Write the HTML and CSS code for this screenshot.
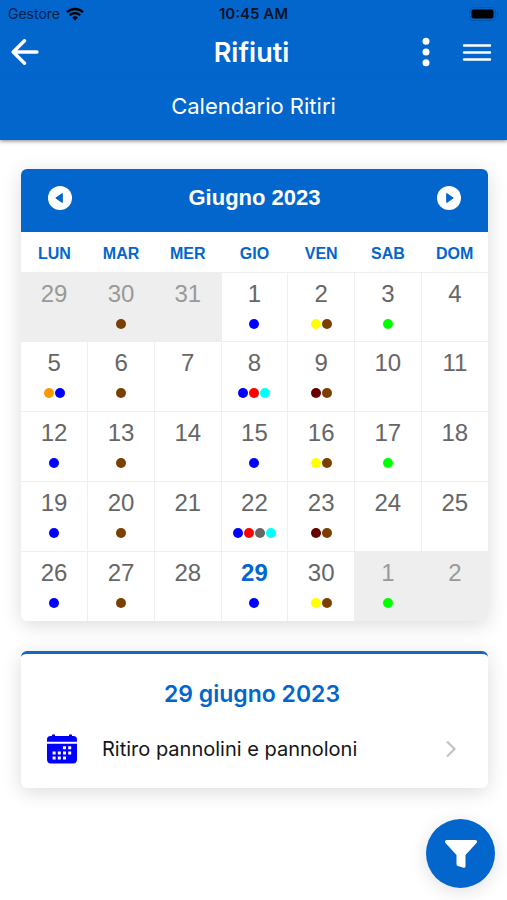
FILE: index.html
```html
<!DOCTYPE html>
<html lang="it">
<head>
<meta charset="utf-8">
<meta name="viewport" content="width=device-width, initial-scale=1">
<title>Rifiuti</title>
<link rel="stylesheet" href="styles.css">
</head>
<body>
<header class="header">
  <div class="status">
    <div class="carrier">
      <span>Gestore</span>
      <svg width="18" height="14" viewBox="0 0 18 14" aria-hidden="true"><path d="M1 5.2a11.6 11.6 0 0 1 16 0M3.8 8.2a7.6 7.6 0 0 1 10.4 0" fill="none" stroke="#000" stroke-width="2.4"/><path d="M6.1 10.6a4.3 4.3 0 0 1 5.8 0L9 13.6z"/></svg>
    </div>
    <span class="clock">10:45 AM</span>
    <svg class="battery" width="30" height="14" viewBox="0 0 30 14" aria-hidden="true"><rect x=".5" y=".5" width="26" height="13" rx="4" fill="none" stroke="#0355b0"/><rect x="2.500" y="2.500" width="22" height="9" rx="2"/><path d="M28 5v4q2-2 0-4" fill="#03479a"/></svg>
  </div>
  <div class="toolbar">
    <button class="icon-button" aria-label="Indietro"><svg width="28" height="26" viewBox="0 0 28 26"><path d="M13.500 1.800 2.200 13l11.300 11.200M2.500 13h23.500" fill="none" stroke="#fff" stroke-width="3.400" stroke-linecap="round" stroke-linejoin="round"/></svg></button>
    <h1 class="title">Rifiuti</h1>
    <div class="actions">
      <button class="icon-button" aria-label="Altro"><svg width="8" height="30" viewBox="0 0 8 30"><g fill="#fff"><circle cx="4" cy="4.300" r="3.500"/><circle cx="4" cy="15" r="3.500"/><circle cx="4" cy="25.700" r="3.500"/></g></svg></button>
      <button class="icon-button" aria-label="Menu"><svg width="30" height="20" viewBox="0 0 30 20"><path d="M2 3.500h26M2 10.500h26M2 17.500h26" stroke="#fff" stroke-width="2.400" stroke-linecap="round"/></svg></button>
    </div>
  </div>
  <h2 class="subtitle">Calendario Ritiri</h2>
</header>
<main class="content">
  <section class="calendar">
    <div class="month-bar">
      <button class="icon-button" aria-label="Mese precedente"><svg width="24" height="24" viewBox="0 0 24 24"><circle cx="12" cy="12" r="12" fill="#fff"/><path d="M14.300 7.500v9L7.800 12z" fill="#0266cd" stroke="#0266cd" stroke-linejoin="round"/></svg></button>
      <h2 class="month">Giugno 2023</h2>
      <button class="icon-button" aria-label="Mese successivo"><svg width="24" height="24" viewBox="0 0 24 24"><circle cx="12" cy="12" r="12" fill="#fff"/><path d="M9.700 7.500v9l6.500-4.500z" fill="#0266cd" stroke="#0266cd" stroke-linejoin="round"/></svg></button>
    </div>
    <table class="days">
      <thead><tr><th>LUN</th><th>MAR</th><th>MER</th><th>GIO</th><th>VEN</th><th>SAB</th><th>DOM</th></tr></thead>
      <tbody>
        <tr>
          <td class="outside">29<div class="dots"></div></td>
          <td class="outside">30<div class="dots"><i class="brown"></i></div></td>
          <td class="outside">31<div class="dots"></div></td>
          <td>1<div class="dots"><i class="blue"></i></div></td>
          <td>2<div class="dots"><i class="yellow"></i><i class="brown"></i></div></td>
          <td>3<div class="dots"><i class="green"></i></div></td>
          <td>4<div class="dots"></div></td>
        </tr>
        <tr>
          <td>5<div class="dots"><i class="orange"></i><i class="blue"></i></div></td>
          <td>6<div class="dots"><i class="brown"></i></div></td>
          <td>7<div class="dots"></div></td>
          <td>8<div class="dots"><i class="blue"></i><i class="red"></i><i class="cyan"></i></div></td>
          <td>9<div class="dots"><i class="maroon"></i><i class="brown"></i></div></td>
          <td>10<div class="dots"></div></td>
          <td>11<div class="dots"></div></td>
        </tr>
        <tr>
          <td>12<div class="dots"><i class="blue"></i></div></td>
          <td>13<div class="dots"><i class="brown"></i></div></td>
          <td>14<div class="dots"></div></td>
          <td>15<div class="dots"><i class="blue"></i></div></td>
          <td>16<div class="dots"><i class="yellow"></i><i class="brown"></i></div></td>
          <td>17<div class="dots"><i class="green"></i></div></td>
          <td>18<div class="dots"></div></td>
        </tr>
        <tr>
          <td>19<div class="dots"><i class="blue"></i></div></td>
          <td>20<div class="dots"><i class="brown"></i></div></td>
          <td>21<div class="dots"></div></td>
          <td>22<div class="dots"><i class="blue"></i><i class="red"></i><i class="gray"></i><i class="cyan"></i></div></td>
          <td>23<div class="dots"><i class="maroon"></i><i class="brown"></i></div></td>
          <td>24<div class="dots"></div></td>
          <td>25<div class="dots"></div></td>
        </tr>
        <tr>
          <td>26<div class="dots"><i class="blue"></i></div></td>
          <td>27<div class="dots"><i class="brown"></i></div></td>
          <td>28<div class="dots"></div></td>
          <td class="today">29<div class="dots"><i class="blue"></i></div></td>
          <td>30<div class="dots"><i class="yellow"></i><i class="brown"></i></div></td>
          <td class="outside">1<div class="dots"><i class="green"></i></div></td>
          <td class="outside">2<div class="dots"></div></td>
        </tr>
      </tbody>
    </table>
  </section>
  <section class="pickups">
    <h2 class="date">29 giugno 2023</h2>
    <a class="pickup" href="#">
      <svg width="30" height="30" viewBox="0 0 30 30" aria-hidden="true"><path d="M0 9V5.500Q0 2 3.500 2H5V.8Q6.500-.4 8 .8V2h14V.8q1.500-1.200 3 0V2h1.500Q30 2 30 5.500V7.800H0z" fill="#00f"/><path d="M0 9.800h30V25q0 4.500-4 4.500H4Q0 29.500 0 25z" fill="#00f"/><g fill="#fff"><path d="M16 12.200h3v3h-3zM21.200 12.200h3v3h-3zM5.600 17.500h3v3h-3zM10.800 17.500h3v3h-3zM16 17.500h3v3h-3zM21.200 17.500h3v3h-3zM5.600 22.600h3v3h-3zM10.800 22.600h3v3h-3zM16 22.600h3v3h-3z"/></g></svg>
      <span class="pickup-name">Ritiro pannolini e pannoloni</span>
      <svg width="12" height="18" viewBox="0 0 12 18" aria-hidden="true"><path d="m2 1.500 7.500 7.500L2 16.500" fill="none" stroke="#c4c4c6" stroke-width="2.200"/></svg>
    </a>
  </section>
</main>
<button class="filter" aria-label="Filtra"><svg width="34" height="30" viewBox="0 0 34 30"><path d="M2.500 1h29q2.500.6 1 3L21.500 16V27.500q-.3 1.500-1.700 1.200l-6-1.800q-1.300-.5-1.300-2V16L1.500 4Q0 1.500 2.500 1z" fill="#fff"/></svg></button>
</body>
</html>
```
FILE: styles.css
```css
* {
  box-sizing: border-box;
}

body {
  margin: 0;
  min-height: 100vh;
  background: #fff;
  color: #151515;
  font-family: Inter, sans-serif;
}

h1, h2 {
  margin: 0;
}

button {
  padding: 0;
  border: 0;
  background: none;
  cursor: pointer;
}

svg {
  display: block;
}

.header {
  background: #0266cd;
  color: #fff;
  box-shadow: 0 1px 4px rgba(0, 0, 0, 0.5);
}

.status {
  display: grid;
  grid-template-columns: 1fr auto 1fr;
  align-items: center;
  height: 27px;
  padding: 0 8px;
  color: #001f45;
  font-size: 14px;
}

.carrier {
  display: flex;
  align-items: center;
  gap: 6px;
}

.clock {
  color: #001226;
  font-size: 15px;
  font-weight: 600;
}

.battery {
  justify-self: end;
}

.toolbar {
  display: grid;
  grid-template-columns: 1fr auto 1fr;
  align-items: center;
  height: 51px;
  padding: 0 15px 0 11px;
  border-bottom: 1px solid #0862c1;
}

.title {
  font-size: 27px;
  font-weight: 600;
}

.actions {
  display: flex;
  align-items: center;
  justify-content: flex-end;
  gap: 32px;
}

.subtitle {
  padding: 14px 0 20px;
  font-size: 22px;
  font-weight: 400;
  line-height: 28px;
  text-align: center;
}

.content {
  display: flex;
  flex-direction: column;
  gap: 30px;
  padding: 29px 19px 29px 21px;
}

.calendar,
.pickups {
  border-radius: 6px;
  background: #fff;
  box-shadow: 0 4px 20px rgba(0, 0, 0, 0.14);
}

.calendar {
  overflow: hidden;
  font-family: "Liberation Sans", sans-serif;
}

.month-bar {
  display: flex;
  align-items: flex-start;
  justify-content: space-between;
  padding: 17px 27px 19px;
  background: #0266cd;
  color: #fff;
}

.month {
  font-size: 22px;
  line-height: 24px;
  padding-bottom: 3px;
}

.days {
  width: 100%;
  height: 389px;
  border-collapse: collapse;
  table-layout: fixed;
  text-align: center;
}

.days th {
  height: 40px;
  padding: 5px 0 0;
  color: #0266cd;
  font-size: 16px;
}

.days td {
  padding: 7px 0 0;
  border: 1px solid #efefef;
  color: #666;
  font-size: 24px;
  line-height: 28px;
  vertical-align: top;
}

.days td:first-child {
  border-left: 0;
}

.days td:last-child {
  border-right: 0;
}

.days tr:last-child td {
  border-bottom: 0;
}

.days .outside {
  background: #eee;
  color: #999;
}

.days .today {
  color: #0266cd;
  font-weight: 700;
}

.dots {
  display: flex;
  justify-content: center;
  gap: 1px;
  height: 10px;
  margin-top: 11px;
}

.dots i {
  width: 10px;
  border-radius: 50%;
}

.blue { background: #00f; }
.brown { background: #7b3f00; }
.yellow { background: #ff0; }
.green { background: #0f0; }
.orange { background: #f90; }
.red { background: #f00; }
.cyan { background: #0ff; }
.maroon { background: #600; }
.gray { background: #666; }

.pickups {
  padding: 26px 31px 24px 26px;
  border-top: 3px solid #1468bd;
}

.date {
  color: #0266cd;
  font-size: 23px;
  font-weight: 600;
  line-height: 28px;
  text-align: center;
}

.pickup {
  display: flex;
  align-items: center;
  margin-top: 26px;
  color: inherit;
  font-size: 20px;
  line-height: 30px;
  text-decoration: none;
}

.pickup-name {
  flex: 1;
  margin-left: 25px;
}

.filter {
  position: fixed;
  right: 12px;
  bottom: 12px;
  display: grid;
  place-items: center;
  width: 69px;
  height: 69px;
  border-radius: 50%;
  background: #0266cd;
  box-shadow: 0 4px 18px rgba(0, 0, 0, 0.12);
}
```
